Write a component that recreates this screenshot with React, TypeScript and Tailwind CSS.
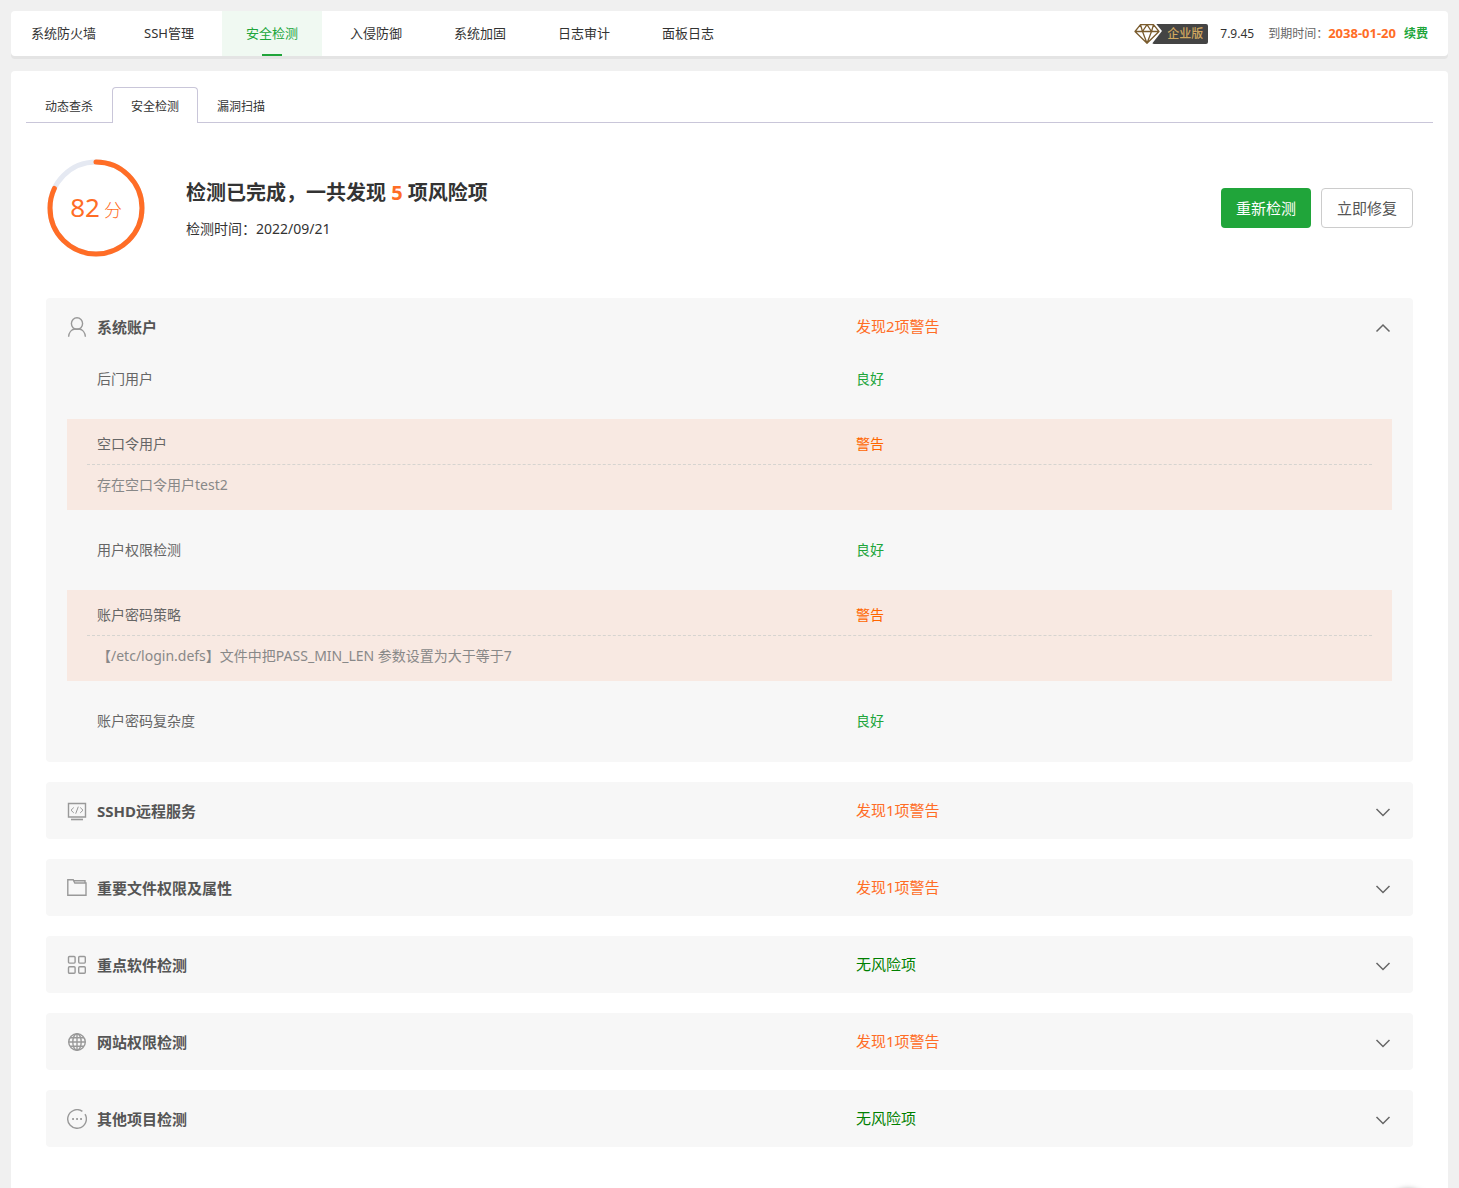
import { useState, type ReactNode } from "react";

const navItems = ["系统防火墙", "SSH管理", "安全检测", "入侵防御", "系统加固", "日志审计", "面板日志"];
const tabs = ["动态查杀", "安全检测", "漏洞扫描"];

type Check = { name: string; detail?: string };
type Section = { title: string; warnings: number; icon: ReactNode; checks: Check[] };

function Icon({ children }: { children: ReactNode }) {
  return (
    <svg
      viewBox="0 0 20 20"
      className="size-5 shrink-0 text-[#999]"
      fill="none"
      stroke="currentColor"
      strokeWidth="1.4"
      aria-hidden="true"
    >
      {children}
    </svg>
  );
}

const sections: Section[] = [
  {
    title: "系统账户",
    warnings: 2,
    icon: (
      <Icon>
        <ellipse cx="10" cy="6.6" rx="5.6" ry="5.8" />
        <path d="M1.6 19.8c.3-4.4 3-7.4 6.2-7.8h4.4c3.2.4 5.900 3.400 6.200 7.800" />
      </Icon>
    ),
    checks: [
      { name: "后门用户" },
      { name: "空口令用户", detail: "存在空口令用户test2" },
      { name: "用户权限检测" },
      { name: "账户密码策略", detail: "【/etc/login.defs】文件中把PASS_MIN_LEN 参数设置为大于等于7" },
      { name: "账户密码复杂度" },
    ],
  },
  {
    title: "SSHD远程服务",
    warnings: 1,
    icon: (
      <Icon>
        <path d="M1.500 2.500h17v13.500h-17z" />
        <path d="M4 18.500h12" strokeWidth="1.600" />
        <path d="M6.800 6.500 4 9.200l2.800 2.700M13.200 6.500 16 9.200l-2.800 2.700M11.300 5.700 8.700 12.700" strokeWidth="1" />
      </Icon>
    ),
    checks: [],
  },
  {
    title: "重要文件权限及属性",
    warnings: 1,
    icon: (
      <Icon>
        <path d="M.800 1.800h5.400l1.600 3.200h11.200v12.300H.800z" />
        <path d="M6.600 2.800h11.400v2.200" />
      </Icon>
    ),
    checks: [],
  },
  {
    title: "重点软件检测",
    warnings: 0,
    icon: (
      <Icon>
        <rect x="1.500" y="1.500" width="6.600" height="6.600" rx="1" />
        <rect x="11.700" y="1.500" width="6.600" height="6.600" rx="1" />
        <rect x="1.500" y="11.700" width="6.600" height="6.600" rx="1" />
        <rect x="11.700" y="11.700" width="6.600" height="6.600" rx="1" />
      </Icon>
    ),
    checks: [],
  },
  {
    title: "网站权限检测",
    warnings: 1,
    icon: (
      <Icon>
        <circle cx="10" cy="10" r="8.300" />
        <ellipse cx="10" cy="10" rx="4.200" ry="8.300" />
        <path d="M10 1.600v16.800M1.600 10h16.800M3 5.800h14M3 14.200h14" />
      </Icon>
    ),
    checks: [],
  },
  {
    title: "其他项目检测",
    warnings: 0,
    icon: (
      <Icon>
        <path d="M15.400 2.400A9.300 9.300 0 1 0 18 5.200" />
        <path d="M5.200 10h1.700M9.200 10h1.700M13.200 10h1.700" strokeWidth="1.800" />
      </Icon>
    ),
    checks: [],
  },
];

function Chevron({ open }: { open: boolean }) {
  return (
    <svg
      viewBox="0 0 20 20"
      className="size-5 shrink-0 text-[#666]"
      fill="none"
      stroke="currentColor"
      strokeWidth="1.500"
      aria-hidden="true"
    >
      <path d={open ? "M4.500 14.500 11 8l6.500 6.500" : "M4.500 8 11 14.500l6.500-6.500"} />
    </svg>
  );
}

function CheckRow({ check }: { check: Check }) {
  if (check.detail) {
    return (
      <li className="bg-[#f8e9e2] px-5 py-[5px]">
        <div className="grid h-[41px] grid-cols-[3fr_2fr] items-center border-b border-dashed border-[#d6d4d0] px-[10px]">
          <span>{check.name}</span>
          <span className="text-[#ff6600]">警告</span>
        </div>
        <p className="px-[10px] leading-10 text-[#888]">{check.detail}</p>
      </li>
    );
  }
  return (
    <li className="grid h-10 grid-cols-[3fr_2fr] items-center px-[30px]">
      <span>{check.name}</span>
      <span className="text-[#20a53a]">良好</span>
    </li>
  );
}

function SectionCard({ section, defaultOpen }: { section: Section; defaultOpen: boolean }) {
  const [open, setOpen] = useState(defaultOpen);
  return (
    <section className="rounded bg-[#f7f7f7]">
      <button
        type="button"
        aria-expanded={open}
        onClick={() => setOpen(!open)}
        className="flex h-[57px] w-full items-center gap-[10px] px-[21px] text-left text-[15px]"
      >
        {section.icon}
        <span className="grid flex-1 grid-cols-[3fr_2fr] items-center">
          <span className="pt-0.5 font-bold text-[#555]">{section.title}</span>
          {section.warnings > 0 ? (
            <span className="text-[#ff6d26]">发现{section.warnings}项警告</span>
          ) : (
            <span className="text-[#008000]">无风险项</span>
          )}
        </span>
        <Chevron open={open} />
      </button>
      {open && section.checks.length > 0 && (
        <ul className="flex flex-col gap-5 px-[21px] pt-1 pb-[21px] text-sm text-[#666]">
          {section.checks.map((c) => (
            <CheckRow key={c.name} check={c} />
          ))}
        </ul>
      )}
    </section>
  );
}

function EditionBadge() {
  return (
    <span className="relative flex h-5 items-center rounded-xs bg-[#444] pr-[5px] pl-[15px] text-xs font-medium text-[#d0a75f]">
      企业版
      <svg viewBox="0 0 30 22" className="absolute -top-px -left-[18px] h-[22px] w-[30px]" fill="none" aria-hidden="true">
        <path d="M6 0h15.500L28 8 17 22H11L0 8z" fill="#fff" />
        <path
          d="M6.500 1.700h13l5.500 6.800L13 20.300 1 8.500zM1 8.500h24M6.500 1.700 8.500 8.500 13 20.300l4.500-11.800 2-6.800M8.500 8.500 13 1.700l4.500 6.800"
          stroke="#7a5c2e"
          strokeWidth="1.300"
          strokeLinejoin="round"
        />
      </svg>
    </span>
  );
}

function ScoreRing({ score }: { score: number }) {
  return (
    <div className="relative flex size-[98px] items-center justify-center text-[#ff6d26]">
      <svg viewBox="0 0 98 98" className="absolute inset-0 size-full -rotate-90" fill="none" strokeWidth="5" aria-hidden="true">
        <circle cx="49" cy="49" r="46" stroke="#e5e9f2" />
        <circle
          cx="49"
          cy="49"
          r="46"
          stroke="#ff6d26"
          strokeLinecap="round"
          pathLength="100"
          strokeDasharray={`${score} 100`}
        />
      </svg>
      <p className="flex items-baseline gap-1 pb-0.5 text-[26px] leading-9">
        {score}
        <span className="text-lg font-light">分</span>
      </p>
    </div>
  );
}

export default function App() {
  const [tab, setTab] = useState(1);
  return (
    <div className="flex min-h-screen flex-col gap-[15px] overflow-hidden bg-[#f0f0f0] px-[11px] pt-[11px] font-['Noto_Sans','Noto_Sans_CJK_SC',sans-serif] text-[#333]">
      <header className="flex h-[45px] items-center justify-between rounded bg-white pr-5 shadow-[0_3px_0_#e4e4e4]">
        <nav className="flex h-full gap-1 text-[13px]">
          {navItems.map((item, i) => (
            <a
              key={item}
              href="#"
              aria-current={i === 2 ? "page" : undefined}
              className={
                i === 2
                  ? "relative flex items-center bg-[#f0f9f2] px-6 text-[#20a53a] after:absolute after:bottom-0 after:left-10 after:h-0.5 after:w-5 after:bg-[#20a53a]"
                  : i === 0
                    ? "flex items-center px-5"
                    : "flex items-center px-6"
              }
            >
              {item}
            </a>
          ))}
        </nav>
        <div className="flex items-center text-xs">
          <EditionBadge />
          <span className="ml-3">7.9.45</span>
          <span className="ml-[14px] text-[#666]">到期时间：</span>
          <span className="text-[13px] font-bold text-[#ff6d26]">2038-01-20</span>
          <a href="#" className="ml-2 font-bold text-[#20a53a]">
            续费
          </a>
        </div>
      </header>

      <main className="flex-1 rounded-t bg-white px-[15px] pt-4">
        <div role="tablist" className="flex h-9 border-b border-[#c9c6d9] text-xs">
          {tabs.map((t, i) => (
            <button
              key={t}
              type="button"
              role="tab"
              aria-selected={i === tab}
              onClick={() => setTab(i)}
              className={
                i === tab
                  ? "-mb-px rounded-t border border-b-0 border-[#c9c6d9] bg-white px-[18px] pt-1 pb-px"
                  : "px-[19px] pt-1"
              }
            >
              {t}
            </button>
          ))}
        </div>

        <div className="px-5 pt-9 pb-10">
          <div className="flex items-center pl-px">
            <ScoreRing score={82} />
            <div className="ml-[41px] flex-1 pt-0.5">
              <h1 className="text-xl leading-7 font-bold">
                检测已完成，一共发现 <span className="text-[#ff6d26]">5</span> 项风险项
              </h1>
              <p className="mt-3 text-sm leading-5">检测时间：2022/09/21</p>
            </div>
            <div className="flex gap-[10px] text-[15px]">
              <button type="button" className="h-10 rounded bg-[#20a53a] px-[15px] text-white">
                重新检测
              </button>
              <button type="button" className="h-10 rounded border border-[#ccc] bg-white px-[15px] text-[#555]">
                立即修复
              </button>
            </div>
          </div>

          <div className="mt-[41px] flex flex-col gap-5">
            {sections.map((s, i) => (
              <SectionCard key={s.title} section={s} defaultOpen={i === 0} />
            ))}
          </div>
        </div>
      </main>

      <button
        type="button"
        aria-label="客服"
        className="fixed right-[31px] -bottom-[42px] size-10 rounded-full bg-white shadow-[0_0_6px_rgba(0,0,0,0.5)]"
      />
    </div>
  );
}
